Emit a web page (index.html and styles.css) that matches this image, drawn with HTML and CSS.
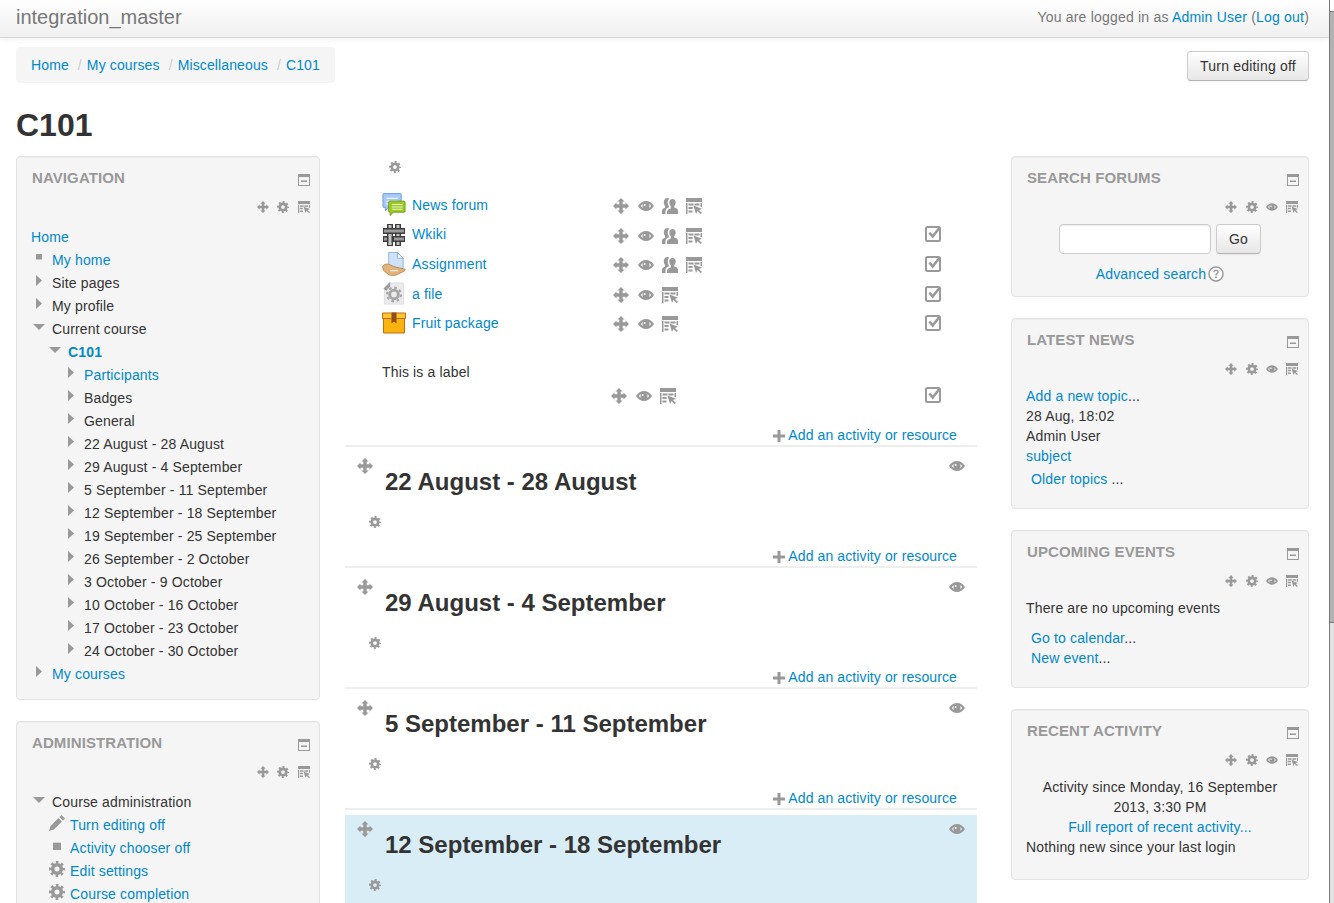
FILE: index.html
```html
<!DOCTYPE html>
<html lang="en">
<head>
<meta charset="utf-8">
<title>C101</title>
<link rel="stylesheet" href="styles.css">
</head>
<body>
<svg class="defs" width="0" height="0" aria-hidden="true">
  <symbol id="i-move" viewBox="0 0 16 16"><path d="M8 0l3.500 3.500H9.700v2.800h2.800V4.500L16 8l-3.500 3.500V9.700H9.700v2.800h1.800L8 16l-3.500-3.500h1.800V9.700H3.500v1.800L0 8l3.500-3.500v1.800h2.800V3.500H4.500z"/></symbol>
  <symbol id="i-gear" viewBox="0 0 16 16"><circle cx="8" cy="8" r="4.300" fill="none" stroke="currentColor" stroke-width="3.600"/><circle cx="8" cy="8" r="6.600" fill="none" stroke="currentColor" stroke-width="2.800" stroke-dasharray="2.600 2.580" stroke-dashoffset="1.300"/></symbol>
  <symbol id="i-eye" viewBox="0 0 16 16"><path fill-rule="evenodd" d="M0 8c2.200-3.500 5-5 8-5s5.800 1.500 8 5c-2.200 3.500-5 5-8 5S2.200 11.500 0 8zm2.800 0C4.300 9.800 6 10.700 8 10.700s3.700-.9 5.200-2.700C11.700 6.200 10 5.300 8 5.300S4.300 6.200 2.800 8z"/><circle cx="8" cy="8" r="3.500"/><circle cx="6.700" cy="7" r="1" fill="#fff"/></symbol>
  <symbol id="i-group" viewBox="0 0 16 16"><path d="M10.500 1c2 0 3.200 1.500 3.200 3.500 0 1.500-.6 2.900-1.500 3.700v1.200c1.700.6 3.800 1.300 3.800 3V16H5v-2.600c0-1.700 2.100-2.400 3.800-3V8.200C7.900 7.400 7.300 6 7.300 4.500 7.300 2.500 8.500 1 10.500 1z"/><path d="M5.500 0c.8 0 1.400.2 1.900.6C6.300 1.500 5.700 3 5.700 4.500c0 1.400.4 2.800 1.200 3.900v.9C5 10 3.500 11.200 3.500 13.400V16H0v-3.600c0-1.500 1.700-2.200 3-2.700V8C2.200 7.200 1.800 5.700 1.800 4.300 1.800 1.800 3.300 0 5.500 0z"/></symbol>
  <symbol id="i-assign" viewBox="0 0 16 16"><path d="M0 0h16v4H0zM0 5h1.500v11H0zM2.500 5.500h5v2h-5zM2.500 9h4v2h-4zM2.500 12.500h4v2h-4zM14.500 5H16v4h-1.500zM8.500 5.500h5v2h-5z"/><path d="M7.500 7.500l8.500 3.300-3 1.200 3 3-1.500 1-3-3-1.500 3z"/></symbol>
  <symbol id="i-min" viewBox="0 0 12 12"><path fill-rule="evenodd" d="M0 0h12v12H0zm1 3v8h10V3z"/><path d="M3 6.500h6V8H3z"/></symbol>
  <symbol id="i-tri-r" viewBox="0 0 12 12"><path d="M3 0l6 5.500L3 11z"/></symbol>
  <symbol id="i-tri-d" viewBox="0 0 12 12"><path d="M0 3h12L6 9z"/></symbol>
  <symbol id="i-sq" viewBox="0 0 12 12"><path d="M3 2h6v5.500H3z"/></symbol>
  <symbol id="i-check" viewBox="0 0 16 16"><rect x="1" y="1" width="14" height="14" rx="1.500" fill="none" stroke="currentColor" stroke-width="2"/><path d="M3.500 7.500l1.700-1.700 2.400 2.600L12.800 2H16l-8.300 10.500z"/></symbol>
  <symbol id="i-plus" viewBox="0 0 12 12"><path d="M4.500 0h3v4.500H12v3H7.500V12h-3V7.500H0v-3h4.500z"/></symbol>
  <symbol id="i-pencil" viewBox="0 0 16 16"><path d="M12.500 0L16 3.500l-2 2L10.500 2zM9.500 3L13 6.500 5 14.500 0 16l1.500-5z"/></symbol>
  <symbol id="i-help" viewBox="0 0 16 16"><circle cx="8" cy="8" r="7" fill="#fff" stroke="currentColor" stroke-width="1.500"/><path d="M5.300 6.200C5.400 4.500 6.500 3.600 8 3.600c1.700 0 2.800 1 2.800 2.300 0 1.100-.6 1.700-1.400 2.300-.5.400-.6.700-.6 1.300H7.200c0-1.100.3-1.600 1-2.200.6-.5 1-.8 1-1.400S8.700 5 8 5c-.8 0-1.200.5-1.300 1.300zM7.100 10.500h1.800v1.800H7.100z"/></symbol>
  <symbol id="a-forum" viewBox="0 0 24 25">
    <path d="M1.500.5h17a1 1 0 0 1 1 1V14a1 1 0 0 1-1 1H6l-3 3.500V15H1.500a1 1 0 0 1-1-1V1.500a1 1 0 0 1 1-1z" fill="#a8c8f4" stroke="#6d9be2"/>
    <path d="M4 5h12v1H4zM4 8h12v1H4zM4 11h6v1H4z" fill="#fff"/>
    <path d="M7.500 8.500h15a1 1 0 0 1 1 1V19a1 1 0 0 1-1 1H11l-3 3.500V20h-.5a1 1 0 0 1-1-1V9.500a1 1 0 0 1 1-1z" fill="#9ccb24" stroke="#6f9a12"/>
    <path d="M10 11.500h11v1H10zM10 14h11v1H10zM10 16.500h11v1H10z" fill="#eaf6c4"/>
  </symbol>
  <symbol id="a-wiki" viewBox="0 0 24 24">
    <g fill="none" stroke="#3c3c3c" stroke-width="6"><path d="M8 1v22M16 1v22"/></g>
    <g fill="none" stroke="#c4c4c4" stroke-width="3"><path d="M8 2v20M16 2v20"/></g>
    <g fill="none" stroke="#3c3c3c" stroke-width="6"><path d="M1 8h22M1 16h11"/></g>
    <g fill="none" stroke="#9a9a9a" stroke-width="3"><path d="M2 8h20M2 16h9"/></g>
    <g fill="none" stroke="#3c3c3c" stroke-width="6"><path d="M12 16h11"/></g>
    <g fill="none" stroke="#9a9a9a" stroke-width="3"><path d="M12 16h10"/></g>
    <g fill="none" stroke="#3c3c3c" stroke-width="6"><path d="M8 13v7"/></g>
    <g fill="none" stroke="#c4c4c4" stroke-width="3"><path d="M8 12v10"/></g>
  </symbol>
  <symbol id="a-assign" viewBox="0 0 24 25">
    <path d="M6.500.5h9l6 6V17h-15z" fill="#cfe3f8" stroke="#8db4e0"/>
    <path d="M15.500.5v6h6z" fill="#fff" stroke="#8db4e0"/>
    <path d="M0 15c2-3 6-3 8-1.500 2 1 5 2 7 2.500l8.500 2c1 .5-.5 2-2 2.500L14 24c-3 1-6.500.5-8.500-1L1 19z" fill="#e3b37c" stroke="#ac7b42" stroke-width=".8"/>
    <path d="M8 19h8v1H8z" fill="#fff"/>
  </symbol>
  <symbol id="a-file" viewBox="0 0 24 25">
    <path d="M7 1h14a1 1 0 0 1 1 1v21H2V6z" fill="#ebebee" stroke="#dcdce0"/>
    <path d="M1 7L8 0v4.500L4 9z" fill="#9c9c9c"/>
    <circle cx="12" cy="13" r="4.500" fill="none" stroke="#a5a5a5" stroke-width="3"/>
    <circle cx="12" cy="13" r="7.200" fill="none" stroke="#a5a5a5" stroke-width="2.200" stroke-dasharray="2.800 2.850"/>
  </symbol>
  <symbol id="a-pack" viewBox="0 0 24 21">
    <path d="M1.500 6h21v14.500h-21z" fill="#fbb40f" stroke="#c06a14"/>
    <path d="M.5.500h23V6H.5z" fill="#fdc72e" stroke="#c06a14"/>
    <path d="M9.500 0h5v11l-2.500-2-2.500 2z" fill="#8f4f1c"/>
  </symbol>
</svg>

<div class="viewport">
  <div class="page">
    <header class="topbar">
      <a class="brand">integration_master</a>
      <div class="login">You are logged in as <a>Admin User</a> (<a>Log out</a>)</div>
    </header>

    <div class="wrap">
      <div class="crumbrow">
        <nav class="crumbs">
          <a>Home</a><span class="sep">/</span><a>My courses</a><span class="sep">/</span><a>Miscellaneous</a><span class="sep">/</span><a>C101</a>
        </nav>
        <button class="btn btn-edit">Turn editing off</button>
      </div>

      <h1 class="title">C101</h1>

      <div class="columns">
        <aside class="col">
          <section class="block">
            <div class="block-head"><h2 class="block-title">Navigation</h2><svg class="ic12"><use href="#i-min"/></svg></div>
            <div class="block-actions"><svg class="ic12"><use href="#i-move"/></svg><svg class="ic12"><use href="#i-gear"/></svg><svg class="ic12"><use href="#i-assign"/></svg></div>
            <div class="tree">
              <div class="node"><a>Home</a></div>
              <div class="node l1"><svg class="twig"><use href="#i-sq"/></svg><a>My home</a></div>
              <div class="node l1"><svg class="twig"><use href="#i-tri-r"/></svg><span>Site pages</span></div>
              <div class="node l1"><svg class="twig"><use href="#i-tri-r"/></svg><span>My profile</span></div>
              <div class="node l1"><svg class="twig"><use href="#i-tri-d"/></svg><span>Current course</span></div>
              <div class="node l2"><svg class="twig"><use href="#i-tri-d"/></svg><a class="strong">C101</a></div>
              <div class="node l3"><svg class="twig"><use href="#i-tri-r"/></svg><a>Participants</a></div>
              <div class="node l3"><svg class="twig"><use href="#i-tri-r"/></svg><span>Badges</span></div>
              <div class="node l3"><svg class="twig"><use href="#i-tri-r"/></svg><span>General</span></div>
              <div class="node l3"><svg class="twig"><use href="#i-tri-r"/></svg><span>22 August - 28 August</span></div>
              <div class="node l3"><svg class="twig"><use href="#i-tri-r"/></svg><span>29 August - 4 September</span></div>
              <div class="node l3"><svg class="twig"><use href="#i-tri-r"/></svg><span>5 September - 11 September</span></div>
              <div class="node l3"><svg class="twig"><use href="#i-tri-r"/></svg><span>12 September - 18 September</span></div>
              <div class="node l3"><svg class="twig"><use href="#i-tri-r"/></svg><span>19 September - 25 September</span></div>
              <div class="node l3"><svg class="twig"><use href="#i-tri-r"/></svg><span>26 September - 2 October</span></div>
              <div class="node l3"><svg class="twig"><use href="#i-tri-r"/></svg><span>3 October - 9 October</span></div>
              <div class="node l3"><svg class="twig"><use href="#i-tri-r"/></svg><span>10 October - 16 October</span></div>
              <div class="node l3"><svg class="twig"><use href="#i-tri-r"/></svg><span>17 October - 23 October</span></div>
              <div class="node l3"><svg class="twig"><use href="#i-tri-r"/></svg><span>24 October - 30 October</span></div>
              <div class="node l1"><svg class="twig"><use href="#i-tri-r"/></svg><a>My courses</a></div>
            </div>
          </section>
          <section class="block">
            <div class="block-head"><h2 class="block-title">Administration</h2><svg class="ic12"><use href="#i-min"/></svg></div>
            <div class="block-actions"><svg class="ic12"><use href="#i-move"/></svg><svg class="ic12"><use href="#i-gear"/></svg><svg class="ic12"><use href="#i-assign"/></svg></div>
            <div class="tree">
              <div class="node l1"><svg class="twig"><use href="#i-tri-d"/></svg><span>Course administration</span></div>
              <div class="node adm"><svg class="twig16"><use href="#i-pencil"/></svg><a>Turn editing off</a></div>
              <div class="node adm"><svg class="twig16 sq"><use href="#i-sq"/></svg><a>Activity chooser off</a></div>
              <div class="node adm"><svg class="twig16"><use href="#i-gear"/></svg><a>Edit settings</a></div>
              <div class="node adm"><svg class="twig16"><use href="#i-gear"/></svg><a>Course completion</a></div>
            </div>
          </section>
        </aside>

        <main class="course">
          <div class="section first">
            <svg class="ic12 sec-gear top-gear"><use href="#i-gear"/></svg>
            <div class="activities">
              <div class="activity"><svg class="mod"><use href="#a-forum"/></svg><a>News forum</a>
                <div class="acts"><svg class="ic16"><use href="#i-move"/></svg><svg class="ic16"><use href="#i-eye"/></svg><svg class="ic16"><use href="#i-group"/></svg><svg class="ic16"><use href="#i-assign"/></svg></div><span></span></div>
              <div class="activity tight low"><svg class="mod"><use href="#a-wiki"/></svg><a>Wkiki</a>
                <div class="acts"><svg class="ic16"><use href="#i-move"/></svg><svg class="ic16"><use href="#i-eye"/></svg><svg class="ic16"><use href="#i-group"/></svg><svg class="ic16"><use href="#i-assign"/></svg></div><svg class="ic16"><use href="#i-check"/></svg></div>
              <div class="activity"><svg class="mod"><use href="#a-assign"/></svg><a>Assignment</a>
                <div class="acts"><svg class="ic16"><use href="#i-move"/></svg><svg class="ic16"><use href="#i-eye"/></svg><svg class="ic16"><use href="#i-group"/></svg><svg class="ic16"><use href="#i-assign"/></svg></div><svg class="ic16"><use href="#i-check"/></svg></div>
              <div class="activity"><svg class="mod"><use href="#a-file"/></svg><a>a file</a>
                <div class="acts"><svg class="ic16"><use href="#i-move"/></svg><svg class="ic16"><use href="#i-eye"/></svg><svg class="ic16"><use href="#i-assign"/></svg></div><svg class="ic16"><use href="#i-check"/></svg></div>
              <div class="activity tight"><svg class="mod"><use href="#a-pack"/></svg><a>Fruit package</a>
                <div class="acts"><svg class="ic16"><use href="#i-move"/></svg><svg class="ic16"><use href="#i-eye"/></svg><svg class="ic16"><use href="#i-assign"/></svg></div><svg class="ic16"><use href="#i-check"/></svg></div>
            </div>
            <p class="label-text">This is a label</p>
            <div class="label-acts">
              <div class="acts"><svg class="ic16"><use href="#i-move"/></svg><svg class="ic16"><use href="#i-eye"/></svg><svg class="ic16"><use href="#i-assign"/></svg></div>
              <svg class="ic16 label-check"><use href="#i-check"/></svg>
            </div>
            <div class="add add-first"><svg class="ic12"><use href="#i-plus"/></svg><a>Add an activity or resource</a></div>
          </div>

          <div class="section">
            <div class="sec-head"><svg class="ic16"><use href="#i-move"/></svg><h3 class="sec-title">22 August - 28 August</h3><svg class="ic16"><use href="#i-eye"/></svg></div>
            <svg class="ic12 sec-gear"><use href="#i-gear"/></svg>
            <div class="add"><svg class="ic12"><use href="#i-plus"/></svg><a>Add an activity or resource</a></div>
          </div>
          <div class="section">
            <div class="sec-head"><svg class="ic16"><use href="#i-move"/></svg><h3 class="sec-title">29 August - 4 September</h3><svg class="ic16"><use href="#i-eye"/></svg></div>
            <svg class="ic12 sec-gear"><use href="#i-gear"/></svg>
            <div class="add"><svg class="ic12"><use href="#i-plus"/></svg><a>Add an activity or resource</a></div>
          </div>
          <div class="section">
            <div class="sec-head"><svg class="ic16"><use href="#i-move"/></svg><h3 class="sec-title">5 September - 11 September</h3><svg class="ic16"><use href="#i-eye"/></svg></div>
            <svg class="ic12 sec-gear"><use href="#i-gear"/></svg>
            <div class="add"><svg class="ic12"><use href="#i-plus"/></svg><a>Add an activity or resource</a></div>
          </div>
          <div class="section current">
            <div class="sec-head"><svg class="ic16"><use href="#i-move"/></svg><h3 class="sec-title">12 September - 18 September</h3><svg class="ic16"><use href="#i-eye"/></svg></div>
            <svg class="ic12 sec-gear"><use href="#i-gear"/></svg>
          </div>
        </main>

        <aside class="col col-right">
          <section class="block">
            <div class="block-head"><h2 class="block-title">Search forums</h2><svg class="ic12"><use href="#i-min"/></svg></div>
            <div class="block-actions"><svg class="ic12"><use href="#i-move"/></svg><svg class="ic12"><use href="#i-gear"/></svg><svg class="ic12"><use href="#i-eye"/></svg><svg class="ic12"><use href="#i-assign"/></svg></div>
            <div class="search">
              <div class="search-form"><input class="search-input" type="text"><button class="btn btn-go">Go</button></div>
              <div class="adv"><a>Advanced search</a><svg class="ic16 help"><use href="#i-help"/></svg></div>
            </div>
          </section>
          <section class="block">
            <div class="block-head"><h2 class="block-title">Latest news</h2><svg class="ic12"><use href="#i-min"/></svg></div>
            <div class="block-actions"><svg class="ic12"><use href="#i-move"/></svg><svg class="ic12"><use href="#i-gear"/></svg><svg class="ic12"><use href="#i-eye"/></svg><svg class="ic12"><use href="#i-assign"/></svg></div>
            <div class="body body-news">
              <div><a>Add a new topic</a>...</div>
              <div>28 Aug, 18:02</div>
              <div>Admin User</div>
              <div><a>subject</a></div>
              <div class="foot older"><a>Older topics</a> ...</div>
            </div>
          </section>
          <section class="block">
            <div class="block-head"><h2 class="block-title">Upcoming events</h2><svg class="ic12"><use href="#i-min"/></svg></div>
            <div class="block-actions"><svg class="ic12"><use href="#i-move"/></svg><svg class="ic12"><use href="#i-gear"/></svg><svg class="ic12"><use href="#i-eye"/></svg><svg class="ic12"><use href="#i-assign"/></svg></div>
            <div class="body body-news">
              <div>There are no upcoming events</div>
              <div class="foot first-foot"><a>Go to calendar</a>...</div>
              <div class="foot"><a>New event</a>...</div>
            </div>
          </section>
          <section class="block">
            <div class="block-head"><h2 class="block-title">Recent activity</h2><svg class="ic12"><use href="#i-min"/></svg></div>
            <div class="block-actions"><svg class="ic12"><use href="#i-move"/></svg><svg class="ic12"><use href="#i-gear"/></svg><svg class="ic12"><use href="#i-eye"/></svg><svg class="ic12"><use href="#i-assign"/></svg></div>
            <div class="body body-recent">
              <div class="centered">Activity since Monday, 16 September 2013, 3:30 PM</div>
              <div class="centered"><a>Full report of recent activity...</a></div>
              <div>Nothing new since your last login</div>
            </div>
          </section>
        </aside>
      </div>
    </div>
  </div>

  <div class="scrollbar">
    <div class="sb-arrow"></div>
    <div class="sb-thumb"></div>
    <div class="sb-track"></div>
  </div>
</div>
</body>
</html>
```

FILE: styles.css
```css
* { box-sizing: border-box; }
html, body { margin: 0; height: 903px; overflow: hidden; background: #fff; }
body { font: 14px/20px "Liberation Sans", Arial, sans-serif; color: #333; letter-spacing: .15px; }
a { color: #0088cc; text-decoration: none; }
svg { display: block; flex: none; color: #999; fill: currentColor; }
.defs { position: absolute; }

.viewport { display: flex; height: 903px; }
.page { width: 1329px; flex: none; overflow: hidden; }

.topbar {
  height: 38px; display: flex; justify-content: space-between; align-items: center;
  padding: 0 20px 4px 16px; background: linear-gradient(#fff, #f0f0f0);
  border-bottom: 1px solid #d5d5d5; box-shadow: 0 1px 6px rgba(0,0,0,.07);
}
.brand { font-size: 20px; color: #777; padding-top: 1px; letter-spacing: 0; }
.login { color: #777; padding-top: 1px; letter-spacing: .2px; }

.wrap { padding: 0 20px 0 16px; }
.crumbrow { display: flex; justify-content: space-between; align-items: flex-start; margin-top: 9px; }
.crumbs { height: 36px; padding: 8px 15px; background: #f5f5f5; border-radius: 4px; display: flex; white-space: nowrap; letter-spacing: .12px; }
.sep { color: #ccc; padding: 0 5px 0 9px; }

.btn {
  font: 14px/20px "Liberation Sans", Arial, sans-serif; color: #333; height: 30px; padding: 0; letter-spacing: .2px;
  background: linear-gradient(#fff, #e6e6e6); border: 1px solid #ccc; border-bottom-color: #b3b3b3;
  border-radius: 4px; box-shadow: inset 0 1px 0 rgba(255,255,255,.2), 0 1px 2px rgba(0,0,0,.05);
}
.btn-edit { width: 122px; margin-top: 4px; }
.btn-go { width: 45px; }

.title { margin: 22px 0 11px; font-size: 32px; line-height: 40px; font-weight: bold; color: #333; letter-spacing: 0; }

.columns { display: grid; grid-template-columns: 304px 691px 298px; }
.course { margin-left: 25px; margin-right: 34px; width: 632px; }

.block {
  background: #f5f5f5; border: 1px solid #e3e3e3; border-radius: 4px; margin-bottom: 21px;
  box-shadow: inset 0 1px 1px rgba(0,0,0,.03);
}
.block-head { display: flex; justify-content: space-between; padding: 11px 9px 0 15px; height: 31px; }
.block-title { margin: 0; font-size: 15px; line-height: 20px; font-weight: bold; color: #999; text-transform: uppercase; letter-spacing: .1px; }
.block-head .ic12 { margin-top: 6px; }
.block-actions { display: flex; justify-content: flex-end; gap: 8px; padding-right: 9px; margin-top: 13px; margin-bottom: 11px; }
.block-actions svg:nth-child(2) { margin-right: 1px; }
.col-right .block-actions { padding-right: 10px; }
.col-right .block-actions svg:first-child { margin-right: 1px; }
.col-right .block-actions svg:nth-child(2) { margin-right: 0; }

.ic12 { width: 12px; height: 12px; }
.ic16 { width: 16px; height: 16px; }

.tree { padding: 1px 0 14px 14px; }
.node { display: flex; align-items: center; height: 23px; white-space: nowrap; }
.strong { font-weight: bold; }
.twig { width: 12px; height: 12px; margin-right: 7px; margin-top: -3px; }
.twig16 { width: 16px; height: 16px; margin-right: 5px; margin-top: -4px; }
.twig16.sq { margin-top: 0; }
.l1 { padding-left: 2px; }
.l2 { padding-left: 18px; }
.l3 { padding-left: 34px; }
.adm { padding-left: 18px; }

.section { margin-top: 5px; border-bottom: 2px solid #eee; }
.section.first { margin-top: 0; }
.section.current { background: #d9edf7; border-bottom: 0; height: 120px; }
.sec-head { display: grid; grid-template-columns: 40px 1fr 40px; justify-items: start; }
.sec-head > .ic16 { margin-top: 6px; justify-self: center; }
.sec-title { margin: 10px 0 0; font-size: 24px; line-height: 40px; font-weight: bold; color: #333; letter-spacing: 0; }
.sec-gear { margin: 14px 0 18px 24px; }
.top-gear { margin: 5px 0 0 44px; }

.activities { margin: 17px 0 0 37px; }
.activity { display: grid; grid-template-columns: 30px 201px 312px 16px; align-items: center; height: 30px; }
.activity.tight { margin-top: -1px; }
.activity.low .acts { padding-top: 4px; }
.activity.low .mod { margin-top: 2px; }
.mod { width: 24px; height: 24px; }
.acts { display: flex; gap: 8px; padding-top: 2px; }
.acts svg:first-child { margin-right: 1px; }
.label-text { margin: 24px 0 0 37px; }
.label-acts { display: flex; margin: 6px 0 0 266px; }
.label-acts .acts { padding-top: 0; width: 314px; }
.label-check { margin-top: -1px; }

.add { display: flex; justify-content: flex-end; align-items: center; gap: 3px; padding-right: 20px; height: 20px; letter-spacing: .11px; }
.add .ic12 { margin-top: 2px; }
.add-first { margin-top: 21px; }

.search { padding-bottom: 12px; }
.search-form { display: flex; justify-content: center; gap: 5px; }
.search-input { width: 152px; height: 30px; background: #fff; border: 1px solid #ccc; border-radius: 4px; box-shadow: inset 0 1px 1px rgba(0,0,0,.075); }
.adv { display: flex; justify-content: center; margin-top: 10px; gap: 2px; }
.help { margin-top: 2px; }

.body { padding: 0 14px; }
.body-news { padding-bottom: 19px; }
.body-recent { padding-bottom: 22px; }
.foot { padding-left: 5px; }
.older { margin-top: 3px; }
.first-foot { margin-top: 10px; }
.centered { text-align: center; }

.scrollbar { width: 5px; flex: none; display: flex; flex-direction: column; border-left: 1px solid #777; height: 903px; }
.sb-arrow { height: 12px; background: #fff; border-bottom: 1px solid #777; }
.sb-thumb { height: 611px; background: #b2b2b2; border-bottom: 1px solid #777; }
.sb-track { flex: 1; background: #e2e2e2; }
```
